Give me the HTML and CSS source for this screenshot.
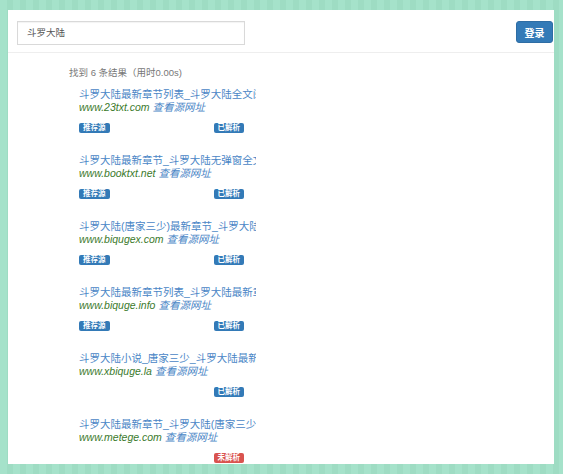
FILE: index.html
```html
<!DOCTYPE html>
<html lang="zh-CN">
<head>
<meta charset="utf-8">
<title>搜索</title>
<link rel="stylesheet" href="styles.css">
</head>
<body>
<div class="page">
  <div class="header">
    <div class="search">斗罗大陆</div>
    <button class="login">登录</button>
  </div>
  <div class="results">
    <div class="summary">找到 6 条结果（用时0.00s)</div>

    <div class="item">
      <div class="title">斗罗大陆最新章节列表_斗罗大陆全文阅读</div>
      <div class="url"><span class="host">www.23txt.com</span> <span class="src">查看源网址</span></div>
      <div class="tags"><span class="tag blue">推荐源</span><span class="tag blue right">已解析</span></div>
    </div>

    <div class="item">
      <div class="title">斗罗大陆最新章节_斗罗大陆无弹窗全文阅读</div>
      <div class="url"><span class="host">www.booktxt.net</span> <span class="src">查看源网址</span></div>
      <div class="tags"><span class="tag blue">推荐源</span><span class="tag blue right">已解析</span></div>
    </div>

    <div class="item">
      <div class="title">斗罗大陆(唐家三少)最新章节_斗罗大陆全文阅读</div>
      <div class="url"><span class="host">www.biqugex.com</span> <span class="src">查看源网址</span></div>
      <div class="tags"><span class="tag blue">推荐源</span><span class="tag blue right">已解析</span></div>
    </div>

    <div class="item">
      <div class="title">斗罗大陆最新章节列表_斗罗大陆最新章节</div>
      <div class="url"><span class="host">www.biquge.info</span> <span class="src">查看源网址</span></div>
      <div class="tags"><span class="tag blue">推荐源</span><span class="tag blue right">已解析</span></div>
    </div>

    <div class="item">
      <div class="title">斗罗大陆小说_唐家三少_斗罗大陆最新章节</div>
      <div class="url"><span class="host">www.xbiquge.la</span> <span class="src">查看源网址</span></div>
      <div class="tags"><span class="tag blue right">已解析</span></div>
    </div>

    <div class="item">
      <div class="title">斗罗大陆最新章节_斗罗大陆(唐家三少)</div>
      <div class="url"><span class="host">www.metege.com</span> <span class="src">查看源网址</span></div>
      <div class="tags"><span class="tag red right">未解析</span></div>
    </div>
  </div>
</div>
</body>
</html>
```
FILE: styles.css
```css
html, body {
  margin: 0;
  padding: 0;
}
body {
  width: 563px;
  height: 474px;
  overflow: hidden;
  background: repeating-linear-gradient(90deg, #a5e2ca 0 7px, #9edcc3 7px 13px);
  font-family: "Liberation Sans", "Noto Sans CJK SC", sans-serif;
}
.page {
  margin: 10px 9px 0 8px;
  height: 454px;
  background: #fff;
  overflow: hidden;
}
.header {
  box-sizing: border-box;
  height: 43px;
  padding: 11px 1px 0 9px;
  display: flex;
  justify-content: space-between;
  align-items: flex-start;
  border-bottom: 1px solid #eeeeee;
}
.search {
  box-sizing: border-box;
  width: 228px;
  height: 24px;
  border: 1px solid #d9d9d9;
  box-shadow: inset 0 1px 1px rgba(0,0,0,0.05);
  padding-left: 9px;
  font-size: 9.5px;
  line-height: 22px;
  color: #555;
}
.login {
  box-sizing: border-box;
  width: 37px;
  height: 22px;
  margin: 0;
  padding: 0;
  border: 1px solid #2e6da4;
  border-radius: 3px;
  background: #337ab7;
  color: #fff;
  font-family: "Liberation Sans", "Noto Sans CJK SC", sans-serif;
  font-size: 10px;
  font-weight: bold;
}
.results {
  padding: 14px 0 0 61px;
}
.summary {
  font-size: 9.5px;
  line-height: 12px;
  color: #777;
  margin-bottom: 8px;
}
.item {
  margin-left: 10px;
  margin-bottom: 20px;
}
.title {
  width: 177px;
  overflow: hidden;
  white-space: nowrap;
  font-size: 10.5px;
  line-height: 14px;
  color: #4a86c6;
}
.url {
  width: 177px;
  overflow: hidden;
  white-space: nowrap;
  font-size: 10.5px;
  line-height: 13px;
  font-style: italic;
}
.host {
  color: #3b7a2c;
}
.src {
  color: #4a86c6;
}
.tags {
  width: 165px;
  height: 10px;
  margin-top: 9px;
  display: flex;
}
.tag {
  height: 10px;
  line-height: 10px;
  padding: 0 4px;
  border-radius: 2px;
  font-size: 7.5px;
  font-weight: bold;
  color: #fff;
}
.tag.blue {
  background: #337ab7;
}
.tag.red {
  background: #d9534f;
}
.tag.right {
  margin-left: auto;
}
```
